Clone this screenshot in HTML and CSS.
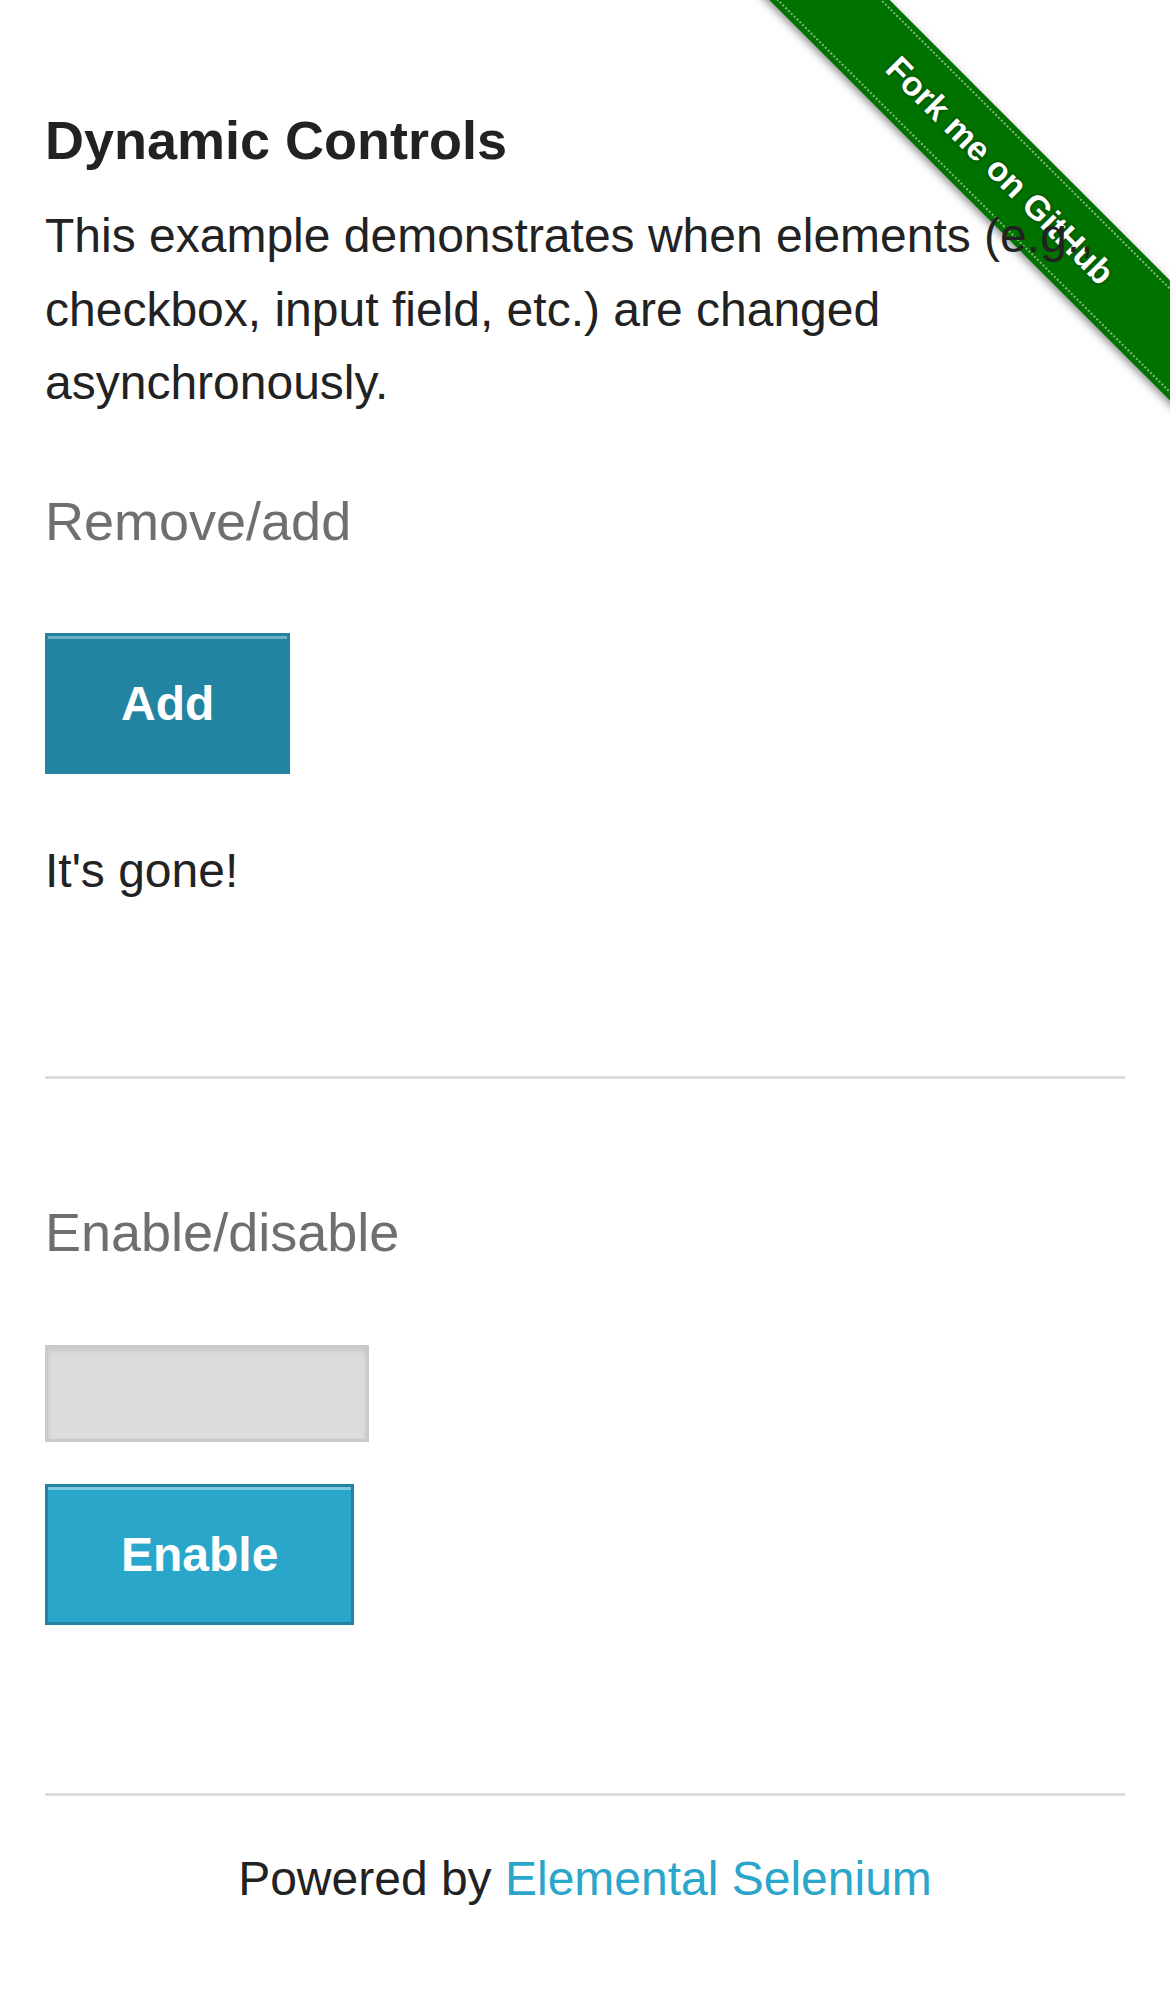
FILE: index.html
```html
<!DOCTYPE html>
<html lang="en">
<head>
<meta charset="utf-8">
<title>The Internet</title>
<link rel="stylesheet" href="styles.css">
</head>
<body>
<div class="ribbon-wrap">
  <a class="ribbon" href="#">Fork me on GitHub</a>
</div>
<div class="page">
  <div class="example">
    <h3 class="title">Dynamic Controls</h3>
    <p class="lead">This example demonstrates when elements (e.g., checkbox, input field, etc.) are changed asynchronously.</p>

    <h4 class="subtitle sub-first">Remove/add</h4>
    <button class="button button-hover btn-add" type="button">Add</button>
    <p class="message">It's gone!</p>

    <hr class="rule rule-mid">

    <h4 class="subtitle sub-second">Enable/disable</h4>
    <input class="text-input" type="text" disabled>
    <button class="button btn-enable" type="button">Enable</button>
  </div>

  <hr class="rule rule-foot">
  <div class="footer">Powered by <a class="footer-link" href="#">Elemental Selenium</a></div>
</div>
</body>
</html>
```
FILE: styles.css
```css
html, body {
  margin: 0;
  padding: 0;
  background: #ffffff;
}

body {
  font-family: "Liberation Sans", Arial, Helvetica, sans-serif;
  color: #222222;
  overflow-x: hidden;
}

.ribbon-wrap {
  position: absolute;
  top: 0;
  right: 0;
  width: 450px;
  height: 450px;
  overflow: hidden;
  z-index: 0;
}

.ribbon {
  position: absolute;
  left: -70px;
  top: 128px;
  width: 700px;
  height: 85px;
  transform: rotate(45deg);
  background: #007200;
  color: #ffffff;
  font-weight: bold;
  font-size: 34px;
  line-height: 85px;
  text-align: center;
  text-decoration: none;
  text-shadow: 0 0 4px rgba(0, 0, 0, 0.55);
  box-shadow: 0 3px 9px rgba(0, 0, 0, 0.45);
}

.ribbon::before {
  content: "";
  position: absolute;
  left: 0;
  right: 0;
  top: 5px;
  bottom: 5px;
  border-top: 2px dotted rgba(255, 255, 255, 0.5);
  border-bottom: 2px dotted rgba(255, 255, 255, 0.5);
}

.page {
  position: relative;
  z-index: 1;
  padding: 108px 45px 60px;
}

.title {
  margin: 0;
  font-size: 54px;
  line-height: 65px;
  font-weight: bold;
  color: #222222;
}

.lead {
  margin: 26px 0 0;
  font-size: 48px;
  line-height: 73.5px;
}

.subtitle {
  margin: 0;
  font-size: 54px;
  line-height: 65px;
  font-weight: normal;
  color: #6f6f6f;
}

.sub-first {
  margin-top: 69px;
}

.sub-second {
  margin-top: 121px;
}

.button {
  display: block;
  margin: 0;
  font-family: "Liberation Sans", Arial, Helvetica, sans-serif;
  font-size: 48px;
  font-weight: bold;
  line-height: 55px;
  padding: 40px 73px;
  color: #ffffff;
  background: #2ba6cb;
  border: 3px solid #2284a1;
  border-radius: 0;
  box-shadow: inset 0 3px 0 rgba(255, 255, 255, 0.4);
  cursor: pointer;
}

.button-hover {
  background: #2284a1;
  box-shadow: inset 0 3px 0 rgba(255, 255, 255, 0.35);
}

.btn-add {
  margin-top: 79px;
}

.message {
  margin: 60px 0 0;
  font-size: 48px;
  line-height: 73.5px;
}

.rule {
  display: block;
  border: 0;
  height: 3px;
  background: #dddddd;
  margin: 0;
}

.rule-mid {
  margin-top: 169px;
}

.text-input {
  display: block;
  box-sizing: border-box;
  width: 324px;
  height: 97px;
  margin: 80px 0 0;
  padding: 0;
  background: #dddddd;
  border: 3px solid #c9c9c9;
  border-radius: 0;
  box-shadow: inset 0 3px 6px rgba(0, 0, 0, 0.1);
  font-size: 42px;
}

.btn-enable {
  margin-top: 42px;
}

.rule-foot {
  margin-top: 168px;
}

.footer {
  margin-top: 46px;
  font-size: 48px;
  line-height: 73.5px;
  text-align: center;
  color: #222222;
}

.footer-link {
  color: #2ba6cb;
  text-decoration: none;
}
```
